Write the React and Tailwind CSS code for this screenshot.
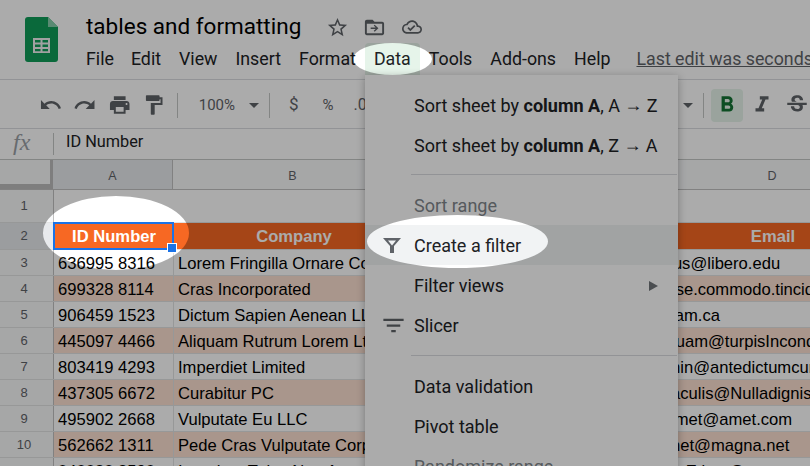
const rows = [
  { n: 3, id: "636995 8316", co: "Lorem Fringilla Ornare Consulting", mail: "tempus@libero.edu" },
  { n: 4, id: "699328 8114", co: "Cras Incorporated", mail: "nulla.se.commodo.tincidunt@sed.org" },
  { n: 5, id: "906459 1523", co: "Dictum Sapien Aenean LLP", mail: "vel.diam.ca" },
  { n: 6, id: "445097 4466", co: "Aliquam Rutrum Lorem Ltd", mail: "a.aliquam@turpisIncondimentum.org" },
  { n: 7, id: "803419 4293", co: "Imperdiet Limited", mail: "ipsumin@antedictumcursus.net" },
  { n: 8, id: "437305 6672", co: "Curabitur PC", mail: "sed.iaculis@Nulladignissim.com" },
  { n: 9, id: "495902 2668", co: "Vulputate Eu LLC", mail: "Proinmet@amet.com" },
  { n: 10, id: "562662 1311", co: "Pede Cras Vulputate Corp.", mail: "vitaenet@magna.net" },
  { n: 11, id: "040080 8590", co: "Interdum Tulus Non Associates", mail: "sed.at.Etiam@nunc.net" },
]

const Icon = ({ d, className }) => (
  <svg viewBox="0 0 24 24" className={className} fill="currentColor">
    <path d={d} fillRule="evenodd" />
  </svg>
)

const Divider = () => <div className="w-px h-[25px] bg-[#c4c7c5]" />

const MenuItem = ({ children, active, disabled, icon, arrow }) => (
  <div className={`relative h-10 flex items-center pl-[49px] ${active ? "bg-[#f1f3f4]" : ""} ${disabled ? "text-[#80868b]" : "text-[#202124]"}`}>
    {icon}
    {children}
    {arrow && <span className="absolute right-[20px] top-[16px] border-y-[5px] border-l-[9px] border-y-transparent border-l-[#70757a]" />}
  </div>
)

export default function App() {
  return (
    <div className="relative w-[810px] h-[466px] overflow-hidden bg-white font-['Roboto',sans-serif]">
      {/* title + menu bar */}
      <header className="flex h-[80px] border-b border-[#dadce0] pl-[25px] pt-[17px]">
        <svg viewBox="0 0 33 45" className="w-[33px] h-[45px] shrink-0">
          <path d="M3 0h20l10 10v32a3 3 0 0 1-3 3H3a3 3 0 0 1-3-3V3a3 3 0 0 1 3-3z" fill="#0f9d58" />
          <path d="M23 0l10 10H23z" fill="#87ceac" />
          <path d="M8 21h17v15H8z" fill="#f1f1f1" />
          <path d="M10 23h5.5v2.5H10zM17.5 23H23v2.5h-5.5zM10 27.5h5.5V30H10zM17.5 27.5H23V30h-5.5zM10 32h5.5v2.2H10zM17.5 32H23v2.2h-5.5z" fill="#0f9d58" />
        </svg>
        <div className="ml-[28px] -mt-[4px]">
          <div className="flex items-center h-[30px] mt-[-1px]">
            <span className="text-[22.5px] text-black">tables and formatting</span>
            <Icon className="w-[23px] h-[23px] ml-[25px] text-[#5f6368]" d="M22 9.24l-7.19-.62L12 2 9.19 8.63 2 9.24l5.46 4.73L5.82 21 12 17.27 18.18 21l-1.63-7.03L22 9.24zM12 15.4l-3.76 2.27 1-4.28-3.32-2.88 4.38-.38L12 6.1l1.71 4.04 4.38.38-3.32 2.88 1 4.28L12 15.4z" />
            <Icon className="w-[23px] h-[23px] ml-[14px] text-[#5f6368]" d="M20 6h-8l-2-2H4c-1.1 0-2 .9-2 2v12c0 1.1.9 2 2 2h16c1.1 0 2-.9 2-2V8c0-1.1-.9-2-2-2zm0 12H4V8h16v10zM12.2 9l-1 1 2 2H8v1.5h5.2l-2 2 1 1 3.9-3.75z" />
            <Icon className="w-[20px] h-[20px] ml-[16px] text-[#5f6368]" d="M19.35 10.04C18.67 6.59 15.64 4 12 4 9.11 4 6.6 5.64 5.35 8.04 2.34 8.36 0 10.91 0 14c0 3.31 2.69 6 6 6h13c2.76 0 5-2.24 5-5 0-2.64-2.05-4.78-4.65-4.96zM19 18H6c-2.21 0-4-1.79-4-4 0-2.05 1.53-3.76 3.56-3.97l1.07-.11.5-.95C8.08 7.14 9.94 6 12 6c2.62 0 4.88 1.86 5.39 4.43l.3 1.5 1.53.11c1.56.1 2.78 1.41 2.78 2.96 0 1.65-1.35 3-3 3zm-9-3.82l-2.09-2.09L6.5 13.5 10 17l6.01-6.01-1.41-1.41z" />
          </div>
          <nav className="flex items-center gap-[18px] h-[32px] mt-[1px] text-[17.8px] text-[#202124] whitespace-nowrap">
            <span>File</span>
            <span className="-ml-[1px]">Edit</span>
            <span>View</span>
            <span>Insert</span>
            <span>Format</span>
            <span className="bg-[#e6f4ea] h-[32px] px-[9px] -mx-[9px] flex items-center rounded-t">Data</span>
            <span>Tools</span>
            <span>Add-ons</span>
            <span>Help</span>
            <span className="ml-[8px] text-[#5f6368] underline">Last edit was seconds ago</span>
          </nav>
        </div>
      </header>

      {/* toolbar */}
      <div className="flex items-center h-[49px] pl-[39px] pt-[2px] border-b border-[#dadce0] text-[#5f6368]">
        <Icon className="w-6 h-6" d="M12.5 8c-2.65 0-5.05.99-6.9 2.6L2 7v9h9l-3.62-3.62c1.39-1.16 3.16-1.88 5.12-1.88 3.54 0 6.55 2.31 7.6 5.5l2.37-.78C21.08 11.03 17.15 8 12.5 8z" />
        <Icon className="w-6 h-6 ml-[11px]" d="M18.4 10.6C16.55 8.99 14.15 8 11.5 8c-4.65 0-8.58 3.03-9.96 7.22L3.9 16c1.05-3.19 4.05-5.5 7.6-5.5 1.95 0 3.73.72 5.12 1.88L13 16h9V7l-3.6 3.6z" />
        <Icon className="w-6 h-6 ml-[11px]" d="M19 8H5c-1.66 0-3 1.34-3 3v6h4v4h12v-4h4v-6c0-1.66-1.34-3-3-3zm-3 11H8v-5h8v5zm3-7c-.55 0-1-.45-1-1s.45-1 1-1 1 .45 1 1-.45 1-1 1zm-1-9H6v4h12V3z" />
        <Icon className="w-6 h-6 ml-[11px]" d="M18 4V3c0-.55-.45-1-1-1H5c-.55 0-1 .45-1 1v4c0 .55.45 1 1 1h12c.55 0 1-.45 1-1V6h1v4H9v11c0 .55.45 1 1 1h2c.55 0 1-.45 1-1v-9h8V4h-3z" />
        <div className="ml-[11px]"><Divider /></div>
        <span className="ml-[21px] text-[15px]">100%</span>
        <span className="ml-[14px] border-x-[5px] border-t-[5px] border-x-transparent border-t-[#5f6368]" />
        <div className="ml-[10px]"><Divider /></div>
        <span className="ml-[19px] text-[17px]">$</span>
        <span className="ml-[24px] text-[15px]">%</span>
        <span className="ml-[20px] text-[16px]">.0</span>
        <span className="ml-[316px] border-x-[5px] border-t-[5px] border-x-transparent border-t-[#5f6368]" />
        <div className="ml-[10px]"><Divider /></div>
        <div className="ml-[7px] w-[33px] h-[33px] flex items-center justify-center rounded-sm bg-[#e6f4ea] text-[#137333]">
          <Icon className="w-[26px] h-[26px]" d="M15.6 10.79c.97-.67 1.65-1.77 1.65-2.79 0-2.26-1.75-4-4-4H7v14h7.04c2.09 0 3.71-1.7 3.71-3.79 0-1.52-.86-2.82-2.15-3.42zM10 6.5h3c.83 0 1.5.67 1.5 1.5s-.67 1.5-1.5 1.5h-3v-3zm3.5 9H10v-3h3.5c.83 0 1.5.67 1.5 1.5s-.67 1.5-1.5 1.5z" />
        </div>
        <Icon className="w-[26px] h-[26px] ml-[6px] shrink-0" d="M10 4v3h2.21l-3.42 8H6v3h8v-3h-2.21l3.42-8H18V4z" />
        <Icon className="w-[26px] h-[26px] ml-[9px] shrink-0" d="M6.85 7.08C6.85 4.37 9.45 3 12.24 3c1.64 0 3 .49 3.9 1.28.77.65 1.46 1.73 1.46 3.24h-3.01c0-.31-.05-.59-.15-.85-.29-.86-1.2-1.28-2.25-1.28-1.86 0-2.34 1.02-2.34 1.7 0 .48.25.88.74 1.21.38.25.77.48 1.41.7H7.39c-.21-.34-.54-.89-.54-1.92zM21 12v-2H3v2h9.62c1.15.45 1.96.75 1.96 1.97 0 1-.81 1.67-2.28 1.67-1.54 0-2.93-.54-2.93-2.51H6.4c0 .55.08 1.13.24 1.58.81 2.29 3.22 3.3 5.67 3.3 2.35 0 5.12-.96 5.12-3.94 0-.47-.02-1.6-.48-2.07H21z" />
      </div>

      {/* formula bar */}
      <div className="flex items-center h-[31px] border-b border-[#c4c7c5]">
        <span className="w-[53px] pl-[13px] mb-[4px] font-['Liberation_Serif',serif] italic text-[24px] text-[#9aa0a6]">fx</span>
        <div className="w-px h-[22px] bg-[#c4c7c5]" />
        <span className="ml-[12px] mb-[3px] text-[16.3px] text-[#202124]">ID Number</span>
      </div>

      {/* sheet */}
      <div className="font-['Liberation_Sans',sans-serif]">
        <div className="flex h-[30px] border-b border-[#c0c0c0] bg-[#f8f9fa] text-[12.5px] text-[#5f6368]">
          <div className="w-[54px] shrink-0 border-r-[4px] border-r-[#bdbdbd] border-b-[5px] border-b-[#bdbdbd] mr-[-1px]" />
          <div className="w-[120px] shrink-0 flex items-center justify-center pt-[3px] bg-[#e8eaed] border-r border-[#c0c0c0]">A</div>
          <div className="w-[240px] shrink-0 flex items-center justify-center pt-[3px] border-r border-[#c0c0c0]">B</div>
          <div className="w-[219px] shrink-0" />
          <div className="w-[280px] shrink-0 flex items-center justify-center pt-[3px]">D</div>
        </div>
        <div className="flex h-[33px] border-b border-[#e2e3e3]">
          <div className="w-[54px] flex items-center justify-center pr-[5px] bg-[#f8f9fa] border-r border-[#c0c0c0] text-[13px] text-[#5f6368]">1</div>
        </div>
        <div className="flex h-[27px] border-b border-[#e2e3e3] text-[16.6px] font-bold text-white">
          <div className="w-[54px] shrink-0 flex items-center justify-center pr-[5px] bg-[#e8eaed] border-r border-[#c0c0c0] text-[13px] font-normal text-[#5f6368]">2</div>
          <div className="w-[120px] shrink-0 flex items-center justify-center pt-[3px] bg-[#f76823]">ID Number</div>
          <div className="w-[240px] shrink-0 flex items-center justify-center pt-[3px] bg-[#f76823]">Company</div>
          <div className="w-[219px] shrink-0 bg-[#f76823]" />
          <div className="w-[280px] shrink-0 flex items-center justify-center pt-[3px] bg-[#f76823]">Email</div>
        </div>
        {rows.map((r, i) => (
          <div key={r.n} className={`flex h-[26px] border-b border-[#e2e3e3] text-[16.6px] text-black whitespace-nowrap ${i % 2 ? "bg-[#fce0d1]" : "bg-white"}`}>
            <div className="w-[54px] shrink-0 flex items-center justify-center pr-[5px] bg-[#f8f9fa] border-r border-[#c0c0c0] text-[13px] text-[#5f6368]">{r.n}</div>
            <div className="w-[120px] shrink-0 flex items-center pl-[4px] pt-[3px] border-r border-[#e2e3e3]">{r.id}</div>
            <div className="w-[240px] shrink-0 flex items-center pl-[4px] pt-[3px] overflow-hidden">{r.co}</div>
            <div className="w-[219px] shrink-0" />
            <div className="w-[280px] shrink-0 flex items-center pl-[3px] pt-[3px]">{r.mail}</div>
          </div>
        ))}
      </div>

      {/* selected cell */}
      <div className="absolute left-[53px] top-[222px] w-[121px] h-[28px] border-2 border-[#1a73e8]" />
      <div className="absolute left-[167px] top-[243px] w-[10px] h-[10px] bg-[#1a73e8] border border-white" />

      {/* data menu */}
      <div className="absolute left-[365px] top-[75px] w-[313px] h-[420px] bg-white rounded-b shadow-[0_2px_8px_rgba(0,0,0,0.3)] py-[10px] text-[18px]">
        <MenuItem>Sort sheet by&nbsp;<b className="font-bold">column A</b>, A&nbsp;<span className="font-['Liberation_Sans',sans-serif]">→</span>&nbsp;Z</MenuItem>
        <MenuItem>Sort sheet by&nbsp;<b className="font-bold">column A</b>, Z&nbsp;<span className="font-['Liberation_Sans',sans-serif]">→</span>&nbsp;A</MenuItem>
        <div className="ml-[46px] mr-px mt-[9px] mb-[10px] h-px bg-[#dadce0]" />
        <MenuItem disabled>Sort range</MenuItem>
        <MenuItem active icon={<Icon className="absolute left-[15px] top-[10px] w-6 h-6 text-[#5f6368]" d="M3 3h18l-7 8v7h-4v-7zM8 5.5h8l-4 5z" />}>Create a filter</MenuItem>
        <MenuItem arrow>Filter views</MenuItem>
        <MenuItem icon={<Icon className="absolute left-[15px] top-[7px] w-[27px] h-[27px] text-[#5f6368]" d="M10 18h4v-2h-4v2zM3 6v2h18V6H3zm3 7h12v-2H6v2z" />}>Slicer</MenuItem>
        <div className="ml-[46px] mr-px my-[10px] h-px bg-[#dadce0]" />
        <MenuItem>Data validation</MenuItem>
        <MenuItem>Pivot table</MenuItem>
        <MenuItem disabled>Randomize range</MenuItem>
      </div>

      {/* dim layer with the three spotlights cut out */}
      <svg className="absolute inset-0 w-[810px] h-[466px]" viewBox="0 0 810 466">
        <path
          fillRule="evenodd"
          fillOpacity="0.33"
          d="M0 0h810v466H0z M43 233a73 37 0 1 0 146 0a73 37 0 1 0-146 0z M367 241.5a90.5 26.5 0 1 0 181 0a90.5 26.5 0 1 0-181 0z M353 59a39.5 16 0 1 0 79 0a39.5 16 0 1 0-79 0z"
        />
      </svg>
    </div>
  )
}
